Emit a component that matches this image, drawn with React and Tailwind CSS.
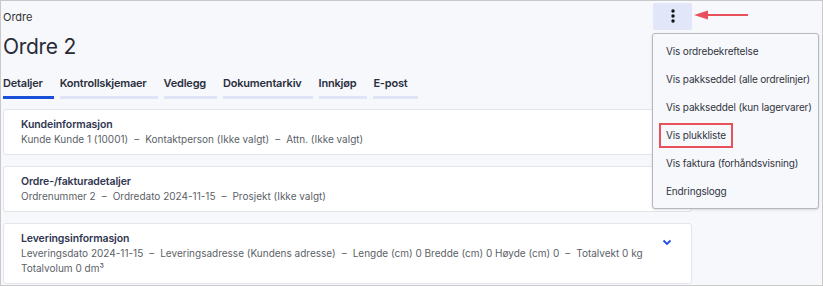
import React from 'react';

const tabs = ['Detaljer', 'Kontrollskjemaer', 'Vedlegg', 'Dokumentarkiv', 'Innkjøp', 'E-post'];

const menuItems = [
  'Vis ordrebekreftelse',
  'Vis pakkseddel (alle ordrelinjer)',
  'Vis pakkseddel (kun lagervarer)',
  'Vis plukkliste',
  'Vis faktura (forhåndsvisning)',
  'Endringslogg',
];

const Sep = () => <span className="mx-[6px]">–</span>;

const InfoCard = ({ title, lines, chevron }) => (
  <div className="relative bg-white border border-[#e3e5eb] rounded-[3px] pl-[17px] pr-[20px] pt-[7px] pb-[7px]">
    <div className="text-[10.5px] leading-[15px] font-semibold tracking-[-0.1px] text-[#2f3650]">{title}</div>
    {lines.map((parts, i) => (
      <div key={i} className="text-[10px] leading-[15px] text-[#5b5f68] whitespace-nowrap">
        {parts.map((p, j) => (
          <React.Fragment key={j}>
            {j > 0 && <Sep />}
            {p}
          </React.Fragment>
        ))}
      </div>
    ))}
    {chevron && (
      <svg className="absolute right-[19px] top-[15px]" width="10" height="7" viewBox="0 0 10 7">
        <path d="M1.5 1.5 L5 5 L8.5 1.5" fill="none" stroke="#1d4fe0" strokeWidth="1.8" />
      </svg>
    )}
  </div>
);

export default function App() {
  return (
    <div
      className="relative w-[823px] h-[286px] bg-[#f7f8fc] border border-[#c9c9c9] overflow-hidden"
      style={{ fontFamily: 'Inter, "Noto Sans", sans-serif' }}
    >
      <div className="w-[691px] pl-[2px] pt-[1px] flex flex-col">
        <div className="flex items-center justify-between h-[28px]">
          <span className="text-[11px] text-[#333] pt-[2px]">Ordre</span>
          <button className="w-[39px] h-[27px] bg-[#e1e6f8] rounded-[2px] flex items-center justify-center">
            <svg width="4" height="14" viewBox="0 0 4 14">
              <circle cx="2" cy="2" r="1.7" fill="#111" />
              <circle cx="2" cy="7" r="1.7" fill="#111" />
              <circle cx="2" cy="12" r="1.7" fill="#111" />
            </svg>
          </button>
        </div>
        <h1 className="text-[21px] leading-[28px] tracking-[-0.3px] text-[#272c37] mt-[3px]">Ordre 2</h1>
        <div className="flex gap-[6px] mt-[15px]">
          {tabs.map((t, i) => (
            <div
              key={t}
              className={
                'pr-[11px] pb-[5px] text-[11px] tracking-[-0.2px] leading-[15px] font-semibold text-[#2a2f3d] border-b-[3px] ' +
                (i === 0 ? 'border-[#1a4fd8]' : 'border-[#dfe5f6]')
              }
            >
              {t}
            </div>
          ))}
        </div>
        <div className="flex flex-col gap-[11px] mt-[10px]">
          <InfoCard
            title="Kundeinformasjon"
            lines={[['Kunde Kunde 1 (10001)', 'Kontaktperson (Ikke valgt)', 'Attn. (Ikke valgt)']]}
          />
          <InfoCard
            title="Ordre-/fakturadetaljer"
            lines={[['Ordrenummer 2', 'Ordredato 2024-11-15', 'Prosjekt (Ikke valgt)']]}
          />
          <InfoCard
            title="Leveringsinformasjon"
            chevron
            lines={[
              [
                'Leveringsdato 2024-11-15',
                'Leveringsadresse (Kundens adresse)',
                'Lengde (cm) 0 Bredde (cm) 0 Høyde (cm) 0',
                'Totalvekt 0 kg',
              ],
              ['Totalvolum 0 dm³'],
            ]}
          />
        </div>
      </div>

      {/* arrow pointing at the menu button */}
      <svg className="absolute left-[692px] top-[8px]" width="58" height="12" viewBox="0 0 58 12">
        <path d="M14 6 H55" stroke="#e8505b" strokeWidth="2" />
        <path d="M1 6 L15 1.5 L15 10.5 Z" fill="#e8505b" />
      </svg>

      {/* dropdown menu */}
      <div className="absolute left-[651px] top-[32px] w-[167px] bg-[#f7f8fc] border border-[#b3b7c0] rounded-[3px] py-[3px] shadow-sm">
        {menuItems.map((m) => (
          <div
            key={m}
            className="h-[28px] flex items-center pl-[13px] whitespace-nowrap text-[10px] tracking-[-0.15px] text-[#30343c]"
          >
            {m === 'Vis plukkliste' ? (
              <span className="-ml-[7px] px-[5px] py-[3px] border-2 border-[#e8505b]">{m}</span>
            ) : (
              m
            )}
          </div>
        ))}
      </div>
    </div>
  );
}
